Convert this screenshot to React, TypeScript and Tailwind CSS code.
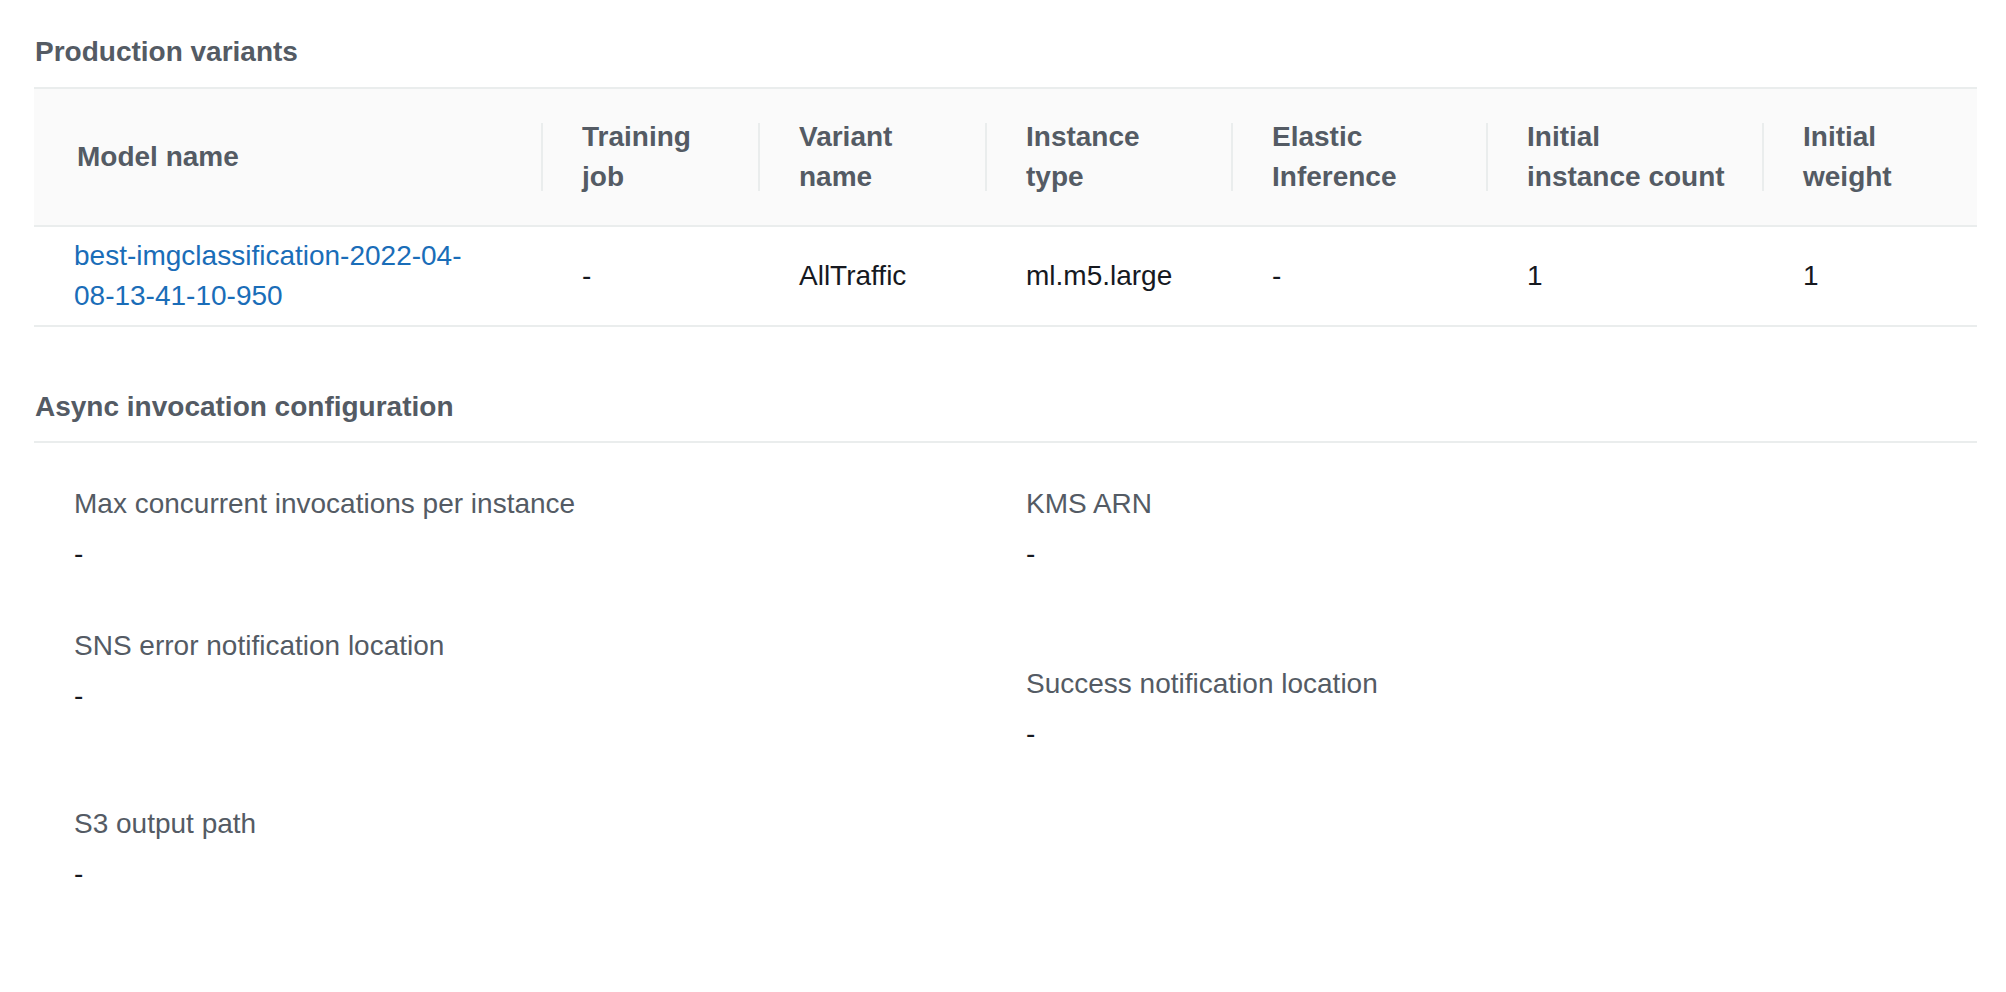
import React from "react";

type Column = { key: string; label: string[]; value: React.ReactNode };

const columns: Column[] = [
    {
        key: "model",
        label: ["Model name"],
        value: (
            <a href="#" className="text-[#1a6db8]">
                best-imgclassification-2022-04-
                <br />
                08-13-41-10-950
            </a>
        ),
    },
    { key: "job", label: ["Training", "job"], value: "-" },
    { key: "variant", label: ["Variant", "name"], value: "AllTraffic" },
    { key: "type", label: ["Instance", "type"], value: "ml.m5.large" },
    { key: "elastic", label: ["Elastic", "Inference"], value: "-" },
    { key: "count", label: ["Initial", "instance count"], value: "1" },
    { key: "weight", label: ["Initial", "weight"], value: "1" },
];

const gridCols = "grid grid-cols-[507px_217px_227px_246px_255px_276px_1fr]";

function SectionHeading({ children, className = "" }: { children: React.ReactNode; className?: string }) {
    return <h2 className={`text-[28px] leading-[40px] font-bold text-[#545b64] pl-px ${className}`}>{children}</h2>;
}

function Field({ label, value, gap }: { label: string; value: string; gap: number }) {
    return (
        <div style={{ marginBottom: gap }}>
            <p className="text-[#545b64] mb-[10px]">{label}</p>
            <p className="text-[#16191f]">{value}</p>
        </div>
    );
}

export default function App() {
    return (
        <div
            className="w-[2006px] h-[992px] overflow-hidden bg-white pl-[34px] pr-[29px] pt-[32px] text-[28px] leading-[40px]"
            style={{ fontFamily: '"Liberation Sans", Arial, sans-serif' }}
        >
            <SectionHeading>Production variants</SectionHeading>

            <div className="mt-[15px]">
                <div className={`${gridCols} bg-[#fafafa] border-y-2 border-[#eaeded]`}>
                    {columns.map((c, i) => (
                        <div key={c.key} className="h-[136px] flex items-center">
                            {i > 0 && <div className="w-[2px] h-[68px] bg-[#eaeded] shrink-0" />}
                            <div className={`font-bold text-[#545b64] ${i === 0 ? "pl-[43px]" : "pl-[39px]"}`}>
                                {c.label.map((l, j) => (
                                    <div key={j} className="whitespace-nowrap">{l}</div>
                                ))}
                            </div>
                        </div>
                    ))}
                </div>
                <div className={`${gridCols} border-b-2 border-[#eaeded]`}>
                    {columns.map((c, i) => (
                        <div
                            key={c.key}
                            className={`py-[9px] flex items-center text-[#16191f] ${i === 0 ? "pl-[40px]" : "pl-[41px]"}`}
                        >
                            <div className="whitespace-nowrap">{c.value}</div>
                        </div>
                    ))}
                </div>
            </div>

            <SectionHeading className="mt-[60px]">Async invocation configuration</SectionHeading>
            <div className="mt-[14px] border-t-2 border-[#eaeded]" />

            <div className="grid grid-cols-[952px_1fr] pt-[41px] pl-[40px]">
                <div>
                    <Field label="Max concurrent invocations per instance" value="-" gap={52} />
                    <Field label="SNS error notification location" value="-" gap={88} />
                    <Field label="S3 output path" value="-" gap={0} />
                </div>
                <div>
                    <Field label="KMS ARN" value="-" gap={90} />
                    <Field label="Success notification location" value="-" gap={0} />
                </div>
            </div>
        </div>
    );
}
